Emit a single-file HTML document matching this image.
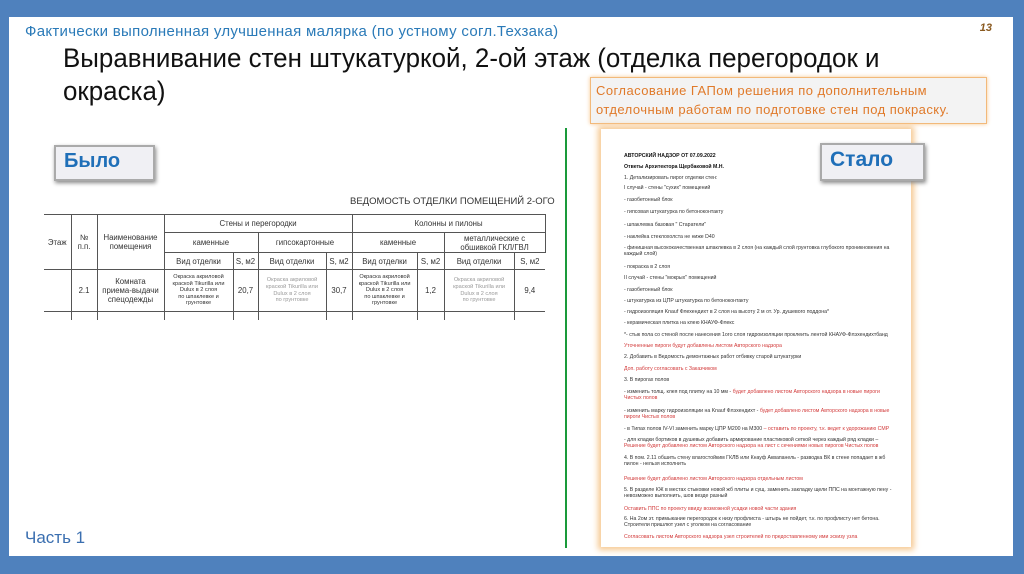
<!DOCTYPE html>
<html><head><meta charset="utf-8"><style>
*{margin:0;padding:0;box-sizing:border-box}
body{width:1024px;height:574px;background:#4f81bd;position:relative;overflow:hidden;font-family:"Liberation Sans",sans-serif}
.panel{position:absolute;left:9px;top:17px;width:1004px;height:539px;background:#fff}
.a{position:absolute;white-space:nowrap}
.sub{left:25px;top:23px;font-size:15px;letter-spacing:.3px;color:#2a7ab8}
.num{right:32px;top:22px;font-size:11px;font-style:italic;font-weight:bold;color:#8a5a20}
.title{left:63px;top:42px;font-size:27px;line-height:33px;color:#111;transform:scaleX(.96);transform-origin:left;white-space:normal;width:900px}
.note{left:590px;top:77px;width:397px;height:47px;border:1px solid #f2b97a;box-shadow:0 0 4px #f6c58e;background:#f3f3f3;color:#e07a2a;font-size:13px;letter-spacing:.45px;line-height:19px;padding:3px 0 0 5px;white-space:nowrap}
.tag{position:absolute;background:#f0f0f4;border:2px solid #aaa;box-shadow:1px 2px 4px #888;color:#1f6fb8;font-weight:bold;font-size:20px;padding:3px 0 0 8px}
.green{position:absolute;left:565px;top:128px;width:2px;height:420px;background:#1a9a3a}
.doc{position:absolute;left:601px;top:129px;width:310px;height:418px;background:#fff;box-shadow:0 0 6px 3px #f6c890}
.d{position:absolute;left:23px;font-size:5.2px;color:#333;white-space:nowrap}
.r{color:#d23a3a}
.b{font-weight:bold;color:#111}
table{position:absolute;left:44px;top:214px;width:501px;table-layout:fixed;border-collapse:collapse;font-size:7.8px;color:#333;text-align:center}
td{border:1px solid #555;padding:0;line-height:9px;overflow:hidden}
.g{color:#999}
.s{font-size:5.6px;line-height:6.6px}
</style></head><body>
<div class="panel"></div>
<div class="a sub">Фактически выполненная улучшенная малярка (по устному согл.Техзака)</div>
<div class="a num">13</div>
<div class="a title">Выравнивание стен штукатуркой, 2-ой этаж (отделка перегородок и окраска)</div>
<div class="a note">Согласование ГАПом решения по дополнительным<br>отделочным работам по подготовке стен под покраску.</div>
<div class="tag" style="left:54px;top:145px;width:101px;height:36px">Было</div>
<div class="a" style="left:350px;top:196px;font-size:9.5px;color:#333">ВЕДОМОСТЬ ОТДЕЛКИ ПОМЕЩЕНИЙ 2-ОГО</div>
<table>
<colgroup><col style="width:27px"><col style="width:26px"><col style="width:67px"><col style="width:69px"><col style="width:25px"><col style="width:68px"><col style="width:26px"><col style="width:65px"><col style="width:27px"><col style="width:70px"><col style="width:31px"></colgroup>
<tr style="height:18px"><td rowspan="3" style="border-left:none">Этаж</td><td rowspan="3">№<br>п.п.</td><td rowspan="3">Наименование<br>помещения</td><td colspan="4">Стены и перегородки</td><td colspan="4">Колонны и пилоны</td></tr>
<tr style="height:20px"><td colspan="2">каменные</td><td colspan="2">гипсокартонные</td><td colspan="2">каменные</td><td colspan="2">металлические с<br>обшивкой ГКЛ/ГВЛ</td></tr>
<tr style="height:17px"><td>Вид отделки</td><td>S, м2</td><td>Вид отделки</td><td>S, м2</td><td>Вид отделки</td><td>S, м2</td><td>Вид отделки</td><td style="border-right:none">S, м2</td></tr>
<tr style="height:42px"><td style="border-left:none"></td><td>2.1</td><td>Комната<br>приема-выдачи<br>спецодежды</td><td class="s">Окраска акриловой<br>краской Tikurilla или<br>Dulux в 2 слоя<br>по шпаклевке и<br>грунтовке</td><td>20,7</td><td class="s g">Окраска акриловой<br>краской Tikurilla или<br>Dulux в 2 слоя<br>по грунтовке</td><td>30,7</td><td class="s">Окраска акриловой<br>краской Tikurilla или<br>Dulux в 2 слоя<br>по шпаклевке и<br>грунтовке</td><td>1,2</td><td class="s g">Окраска акриловой<br>краской Tikurilla или<br>Dulux в 2 слоя<br>по грунтовке</td><td style="border-right:none">9,4</td></tr>
<tr style="height:8px"><td style="border-left:none;border-bottom:none"></td><td style="border-bottom:none"></td><td style="border-bottom:none"></td><td style="border-bottom:none"></td><td style="border-bottom:none"></td><td style="border-bottom:none"></td><td style="border-bottom:none"></td><td style="border-bottom:none"></td><td style="border-bottom:none"></td><td style="border-bottom:none"></td><td style="border-bottom:none;border-right:none"></td></tr>
</table>
<div class="green"></div>
<div class="doc">
<div class="d b" style="top:24px">АВТОРСКИЙ НАДЗОР ОТ 07.09.2022</div>
<div class="d b" style="top:35px">Ответы Архитектора Щербаковой М.Н.</div>
<div class="d" style="top:46px">1. Детализировать пирог отделки стен:</div>
<div class="d" style="top:56px">I случай - стены "сухих" помещений</div>
<div class="d" style="top:68px">- газобетонный блок</div>
<div class="d" style="top:80px">- гипсовая штукатурка по бетоноконтакту</div>
<div class="d" style="top:93px">- шпаклевка базовая " Старатели"</div>
<div class="d" style="top:105px">- наклейка стеклохолста не ниже D40</div>
<div class="d" style="top:116px">- финишная высококачественная шпаклевка в 2 слоя (на каждый слой грунтовка глубокого проникновения на<br>каждый слой)</div>
<div class="d" style="top:135px">- покраска в 2 слоя</div>
<div class="d" style="top:146px">II случай - стены "мокрых" помещений</div>
<div class="d" style="top:158px">- газобетонный блок</div>
<div class="d" style="top:169px">- штукатурка из ЦПР штукатурка по бетоноконтакту</div>
<div class="d" style="top:180px">- гидроизоляция Knauf Флехендихт в 2 слоя на высоту 2 м от. Ур. душевого поддона*</div>
<div class="d" style="top:191px">- керамическая плитка на клею КНАУФ-Флекс</div>
<div class="d" style="top:203px">*- стык пола со стеной после нанесения 1ого слоя гидроизоляции проклеить лентой КНАУФ-Флэхендихтбанд</div>
<div class="d r" style="top:214px">Уточненные пироги будут добавлены листом Авторского надзора</div>
<div class="d" style="top:225px">2. Добавить в Ведомость демонтажных работ отбивку старой штукатурки</div>
<div class="d r" style="top:237px">Доп. работу согласовать с Заказчиком</div>
<div class="d" style="top:248px">3. В пирогах полов</div>
<div class="d" style="top:260px">- изменить толщ. клея под плитку на 10 мм - <span class="r">будет добавлено листом Авторского надзора в новые пироги<br>Чистых полов</span></div>
<div class="d" style="top:279px">- изменить марку гидроизоляции на Knauf Флэхендихт - <span class="r">будет добавлено листом Авторского надзора в новые<br>пироги Чистых полов</span></div>
<div class="d" style="top:297px">- в Типах полов IV-VI заменить марку ЦПР М200 на М300 <span class="r">– оставить по проекту, т.к. ведет к удорожанию СМР</span></div>
<div class="d" style="top:308px">- для кладки бортиков в душевых добавить армирование пластиковой сеткой через каждый ряд кладки –<br><span class="r">Решение будет добавлено листом Авторского надзора на лист с сечениями новых пирогов Чистых полов</span></div>
<div class="d" style="top:326px">4. В пом. 2.11 обшить стену влагостойким ГКЛВ или Кнауф Аквапанель - разводка ВК в стене попадает в жб<br>пилон - нельзя исполнить</div>
<div class="d r" style="top:347px">Решение будет добавлено листом Авторского надзора отдельным листом</div>
<div class="d" style="top:358px">5. В разделе КЖ в местах стыковки новой жб плиты и сущ. заменить закладку щели ППС на монтажную пену -<br>невозможно выполнить, шов везде разный</div>
<div class="d r" style="top:377px">Оставить ППС по проекту ввиду возможной усадки новой части здания</div>
<div class="d" style="top:387px">6. На 2ом эт. примыкание перегородок к низу профлиста - штырь не пойдет, т.к. по профлисту нет бетона.<br>Строители пришлют узел с уголком на согласование</div>
<div class="d r" style="top:405px">Согласовать листом Авторского надзора узел строителей по предоставленному ими эскизу узла</div>
</div>
<div class="tag" style="left:820px;top:143px;width:105px;height:38px;font-size:21px">Стало</div>
<div class="a" style="left:25px;top:528px;font-size:17px;color:#3b6fb0">Часть 1</div>
</body></html>
